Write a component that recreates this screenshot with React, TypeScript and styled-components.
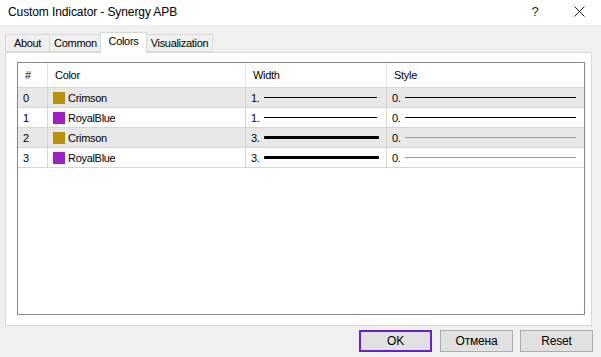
import React, { FC } from 'react';
import styled, { createGlobalStyle } from 'styled-components';

const GlobalStyle = createGlobalStyle`
  html, body {
    margin: 0;
    padding: 0;
    background: #f0f0f0;
  }
  * {
    box-sizing: border-box;
  }
`;

interface Buffer {
  id: number;
  name: string;
  swatch: string;
  width: number;
  styleMuted: boolean;
}

const buffers: Buffer[] = [
  { id: 0, name: 'Crimson', swatch: '#b8900a', width: 1, styleMuted: false },
  { id: 1, name: 'RoyalBlue', swatch: '#a020c8', width: 1, styleMuted: false },
  { id: 2, name: 'Crimson', swatch: '#b8900a', width: 3, styleMuted: true },
  { id: 3, name: 'RoyalBlue', swatch: '#a020c8', width: 3, styleMuted: true },
];

const tabs = ['About', 'Common', 'Colors', 'Visualization'];
const tabWidths = [44, 52, 47, 67];
const COLS = '30px 198px 141px 1fr';

const Window = styled.div`
  width: 601px;
  height: 357px;
  background: #f0f0f0;
  display: flex;
  flex-direction: column;
  font-family: 'Liberation Sans', Arial, sans-serif;
  color: #000;
  overflow: hidden;
`;

const TitleBar = styled.div`
  height: 25px;
  background: #fff;
  display: flex;
  align-items: center;
  padding: 0 0 2px 8px;
`;

const Title = styled.div`
  flex: 1;
  font-size: 12px;
  letter-spacing: -0.1px;
`;

const TitleButton = styled.div`
  width: 44px;
  height: 25px;
  display: flex;
  align-items: center;
  justify-content: center;
  font-size: 13px;
  color: #222;
`;

const Body = styled.div`
  flex: 1;
  display: flex;
  flex-direction: column;
  padding: 7px 9px 0 5px;
`;

const TabStrip = styled.div`
  display: flex;
  height: 20px;
  align-items: flex-end;
  position: relative;
  z-index: 1;
`;

const Tab = styled.div<{ active?: boolean; w: number }>`
  width: ${(p) => p.w}px;
  height: ${(p) => (p.active ? '21px' : '18px')};
  margin: 0 ${(p) => (p.active ? '-1px' : '0')} ${(p) => (p.active ? '-1px' : '0')};
  background: ${(p) => (p.active ? '#fff' : '#f0f0f0')};
  border: 1px solid #d9d9d9;
  border-bottom: ${(p) => (p.active ? 'none' : '1px solid #d9d9d9')};
  border-right: ${(p) => (p.active ? '1px solid #d9d9d9' : 'none')};
  font-size: 11px;
  letter-spacing: -0.3px;
  display: flex;
  justify-content: center;
  padding-top: 2px;
  &:last-child {
    border-right: 1px solid #d9d9d9;
  }
`;

const Panel = styled.div`
  height: 274px;
  background: #fff;
  border: 1px solid #d9d9d9;
  padding: 9px 6px 10px 11px;
  display: flex;
`;

const List = styled.div`
  flex: 1;
  border: 1px solid #828790;
  background: #fff;
  font-size: 11px;
  letter-spacing: -0.3px;
`;

const HeaderRow = styled.div`
  display: grid;
  grid-template-columns: ${COLS};
  height: 25px;
  border-bottom: 1px solid #d6d6d6;
`;

const HeaderCell = styled.div`
  display: flex;
  align-items: center;
  padding-left: 7px;
  border-right: 1px solid #e5e5e5;
  &:last-child {
    border-right: none;
  }
`;

const Row = styled.div<{ shaded: boolean }>`
  display: grid;
  grid-template-columns: ${COLS};
  height: 20px;
  background: ${(p) => (p.shaded ? '#e8e8e8' : '#fff')};
  border-bottom: 1px solid #d6d6d6;
`;

const Cell = styled.div`
  display: flex;
  align-items: center;
  padding-left: 5px;
  border-right: 1px solid #d6d6d6;
  overflow: hidden;
  white-space: nowrap;
  &:last-child {
    border-right: none;
  }
`;

const Swatch = styled.span<{ color: string }>`
  width: 12px;
  height: 12px;
  background: ${(p) => p.color};
  margin-right: 3px;
  flex: none;
`;

const Value = styled.span`
  width: 13px;
  flex: none;
`;

const Line = styled.span<{ thick: number; muted?: boolean; w: number }>`
  width: ${(p) => p.w}px;
  height: ${(p) => p.thick}px;
  background: ${(p) => (p.muted ? '#9a9a9a' : '#000')};
  border-radius: ${(p) => (p.thick > 1 ? '1px' : '0')};
  flex: none;
`;

const Footer = styled.div`
  height: 31px;
  display: flex;
  justify-content: flex-end;
  align-items: flex-start;
  gap: 7px;
  padding-top: 4px;
  margin-right: -1px;
`;

const Button = styled.div<{ primary?: boolean }>`
  width: 73px;
  height: 22px;
  margin-right: ${(p) => (p.primary ? '1px' : '0')};
  background: #e1e1e1;
  border: ${(p) => (p.primary ? '2px solid #6a1fd0' : '1px solid #adadad')};
  display: flex;
  align-items: center;
  justify-content: center;
  font-size: 12px;
  letter-spacing: -0.2px;
`;

const App: FC = () => (
  <Window>
    <GlobalStyle />
    <TitleBar>
      <Title>Custom Indicator - Synergy APB</Title>
      <TitleButton>?</TitleButton>
      <TitleButton>
        <svg width="11" height="11" viewBox="0 0 11 11">
          <path d="M0.5 0.5 L10.5 10.5 M10.5 0.5 L0.5 10.5" stroke="#222" strokeWidth="1" />
        </svg>
      </TitleButton>
    </TitleBar>
    <Body>
      <TabStrip>
        {tabs.map((t, i) => (
          <Tab key={t} w={tabWidths[i]} active={t === 'Colors'}>
            {t}
          </Tab>
        ))}
      </TabStrip>
      <Panel>
        <List>
          <HeaderRow>
            <HeaderCell>#</HeaderCell>
            <HeaderCell>Color</HeaderCell>
            <HeaderCell>Width</HeaderCell>
            <HeaderCell>Style</HeaderCell>
          </HeaderRow>
          {buffers.map((b) => (
            <Row key={b.id} shaded={b.id % 2 === 0}>
              <Cell>{b.id}</Cell>
              <Cell>
                <Swatch color={b.swatch} />
                {b.name}
              </Cell>
              <Cell>
                <Value>{b.width}.</Value>
                <Line thick={b.width} w={b.width > 1 ? 115 : 113} />
              </Cell>
              <Cell>
                <Value>0.</Value>
                <Line thick={1} muted={b.styleMuted} w={171} />
              </Cell>
            </Row>
          ))}
        </List>
      </Panel>
      <Footer>
        <Button primary>OK</Button>
        <Button>Отмена</Button>
        <Button>Reset</Button>
      </Footer>
    </Body>
  </Window>
);

export default App;
